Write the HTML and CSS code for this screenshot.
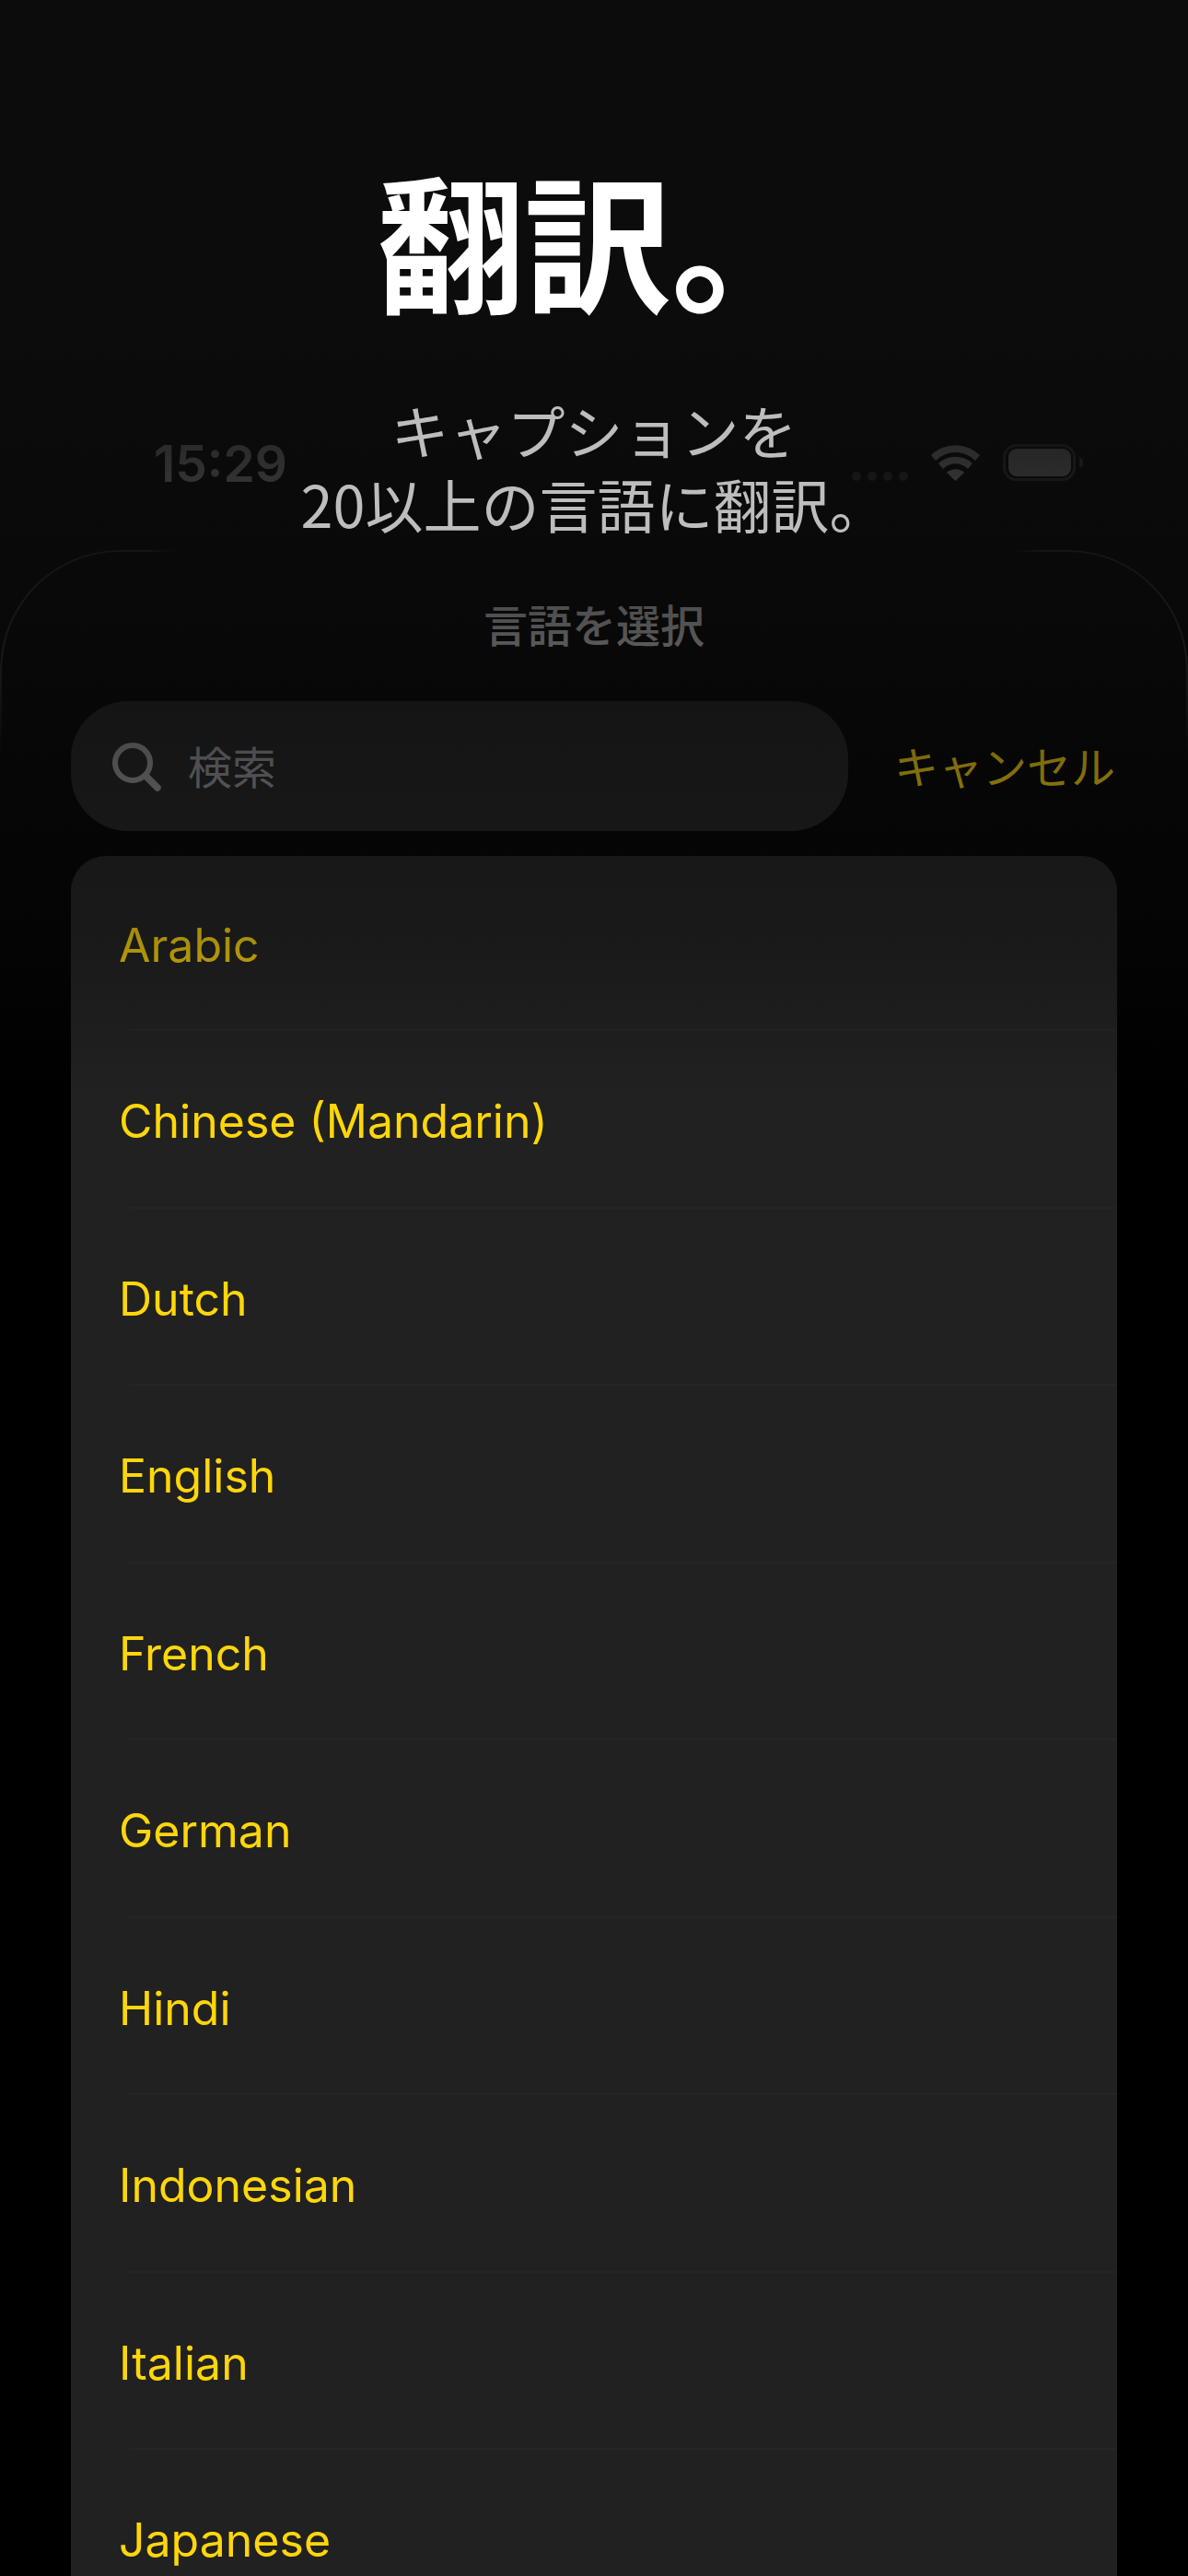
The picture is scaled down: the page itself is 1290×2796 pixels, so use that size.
FILE: index.html
```html
<!DOCTYPE html>
<html lang="ja">
<head>
<meta charset="utf-8">
<title>翻訳</title>
<link rel="stylesheet" href="styles.css">
</head>
<body>
<main class="page">
  <div class="status">
    <span class="time">15:29</span>
    <svg class="status-icons" width="251" height="40" viewBox="0 0 251 40" aria-hidden="true">
      <g fill="#fff" opacity=".3">
        <circle cx="5" cy="35" r="5"/><circle cx="22" cy="35" r="5"/><circle cx="39" cy="35" r="5"/><circle cx="56" cy="35" r="5"/>
      </g>
      <g fill="#fff">
        <path d="M86 13 A38 38 0 0 1 139 13 L134 19 A30 30 0 0 0 91 19 Z" transform="translate(0 -1)"/>
        <path d="M94 22 A27 27 0 0 1 131 22 L126 28 A19 19 0 0 0 99 28 Z" transform="translate(0 -1)"/>
        <path d="M103 31 A14 14 0 0 1 122 31 L112.5 40 Z"/>
      </g>
      <rect x="165.5" y="1.5" width="76" height="37" rx="13" fill="none" stroke="#fff" stroke-opacity=".35" stroke-width="3"/>
      <rect x="170" y="5" width="68" height="30" rx="9" fill="#fff" fill-opacity=".85"/>
      <path d="M247 14 C250 15 251 17 251 20 C251 23 250 25 247 26 Z" fill="#fff" fill-opacity=".4"/>
    </svg>
  </div>
  <section class="sheet">
    <h2 class="sheet-title">言語を選択</h2>
    <div class="search-row">
      <div class="search">
        <svg class="search-icon" width="53" height="53" viewBox="0 0 53 53" aria-hidden="true">
          <circle cx="22" cy="22" r="19" fill="none" stroke="currentColor" stroke-width="6"/>
          <path d="M36 36 L49 49" fill="none" stroke="currentColor" stroke-width="7.5" stroke-linecap="round"/>
        </svg>
        <span class="search-text">検索</span>
      </div>
      <span class="cancel">キャンセル</span>
    </div>
    <ul class="list">
      <li class="row"><span class="label">Arabic</span></li>
      <li class="row"><span class="label">Chinese (Mandarin)</span></li>
      <li class="row"><span class="label">Dutch</span></li>
      <li class="row"><span class="label">English</span></li>
      <li class="row"><span class="label">French</span></li>
      <li class="row"><span class="label">German</span></li>
      <li class="row"><span class="label">Hindi</span></li>
      <li class="row"><span class="label">Indonesian</span></li>
      <li class="row"><span class="label">Italian</span></li>
      <li class="row"><span class="label">Japanese</span></li>
    </ul>
  </section>
</main>
<header class="hero">
  <h1 class="hero-title">翻訳。</h1>
  <p class="hero-sub">キャプションを<br>20以上の言語に翻訳。</p>
</header>
</body>
</html>
```
FILE: styles.css
```css
* { box-sizing: border-box; }
html, body { margin: 0; padding: 0; background: #000; }
body {
  position: relative;
  width: 1290px;
  height: 2796px;
  overflow: hidden;
  font-family: "Noto Sans CJK JP", "Noto Sans", sans-serif;
  color: #fff;
}
.page { padding-top: 460px; }

.status {
  display: flex;
  justify-content: space-between;
  align-items: center;
  height: 86px;
  padding: 0 114px 0 167px;
}
.time {
  font: 600 55px/1 Inter, "Liberation Sans", sans-serif;
  color: #fff;
}
.status-icons { display: block; margin-top: -2px; }

.sheet {
  position: relative;
  margin-top: 51px;
  padding: 0 77px;
}
.sheet::before {
  content: "";
  position: absolute;
  left: 0;
  right: 0;
  top: 0;
  height: 220px;
  border: 2px solid #363636;
  border-bottom: 0;
  border-radius: 130px 130px 0 0;
  -webkit-mask-image: linear-gradient(to bottom, #000 50%, transparent 100%), linear-gradient(to right, #000 160px, transparent 190px, transparent 1100px, #000 1130px);
  -webkit-mask-composite: source-in;
  mask-composite: intersect;
}
.sheet-title {
  margin: 0;
  padding-top: 48px;
  height: 164px;
  font-size: 48px;
  line-height: 62px;
  font-weight: 500;
  text-align: center;
  color: #fff;
}
.search-row {
  display: flex;
  align-items: center;
  justify-content: space-between;
  height: 141px;
}
.search {
  display: flex;
  align-items: center;
  gap: 29px;
  width: 844px;
  height: 141px;
  padding-left: 45px;
  border-radius: 62px;
  background: #212121;
  color: #98989e;
}
.search-text { font-size: 48px; line-height: 60px; margin-top: -4px; }
.search-icon { display: block; margin-top: 2px; }
.cancel {
  font-size: 48px;
  line-height: 60px;
  margin-top: -4px;
  color: #ffd60a;
  margin-right: 2px;
}

.list {
  list-style: none;
  margin: 27px 0 0;
  padding: 0;
  width: 1136px;
  border-radius: 38px;
  background: #212121;
}
.row {
  display: flex;
  align-items: center;
  height: 192.5px;
  margin-left: 63px;
  padding-top: 6px;
  border-bottom: 2px solid #252525;
}
.row:first-child { height: 190px; padding-top: 6px; }
.label {
  margin-left: -11px;
  font: 420 50px/60px Inter, "Liberation Sans", sans-serif;
  color: #ffd60a;
}

.hero {
  position: absolute;
  left: 0;
  right: 0;
  top: 0;
  height: 1190px;
  text-align: center;
  background: linear-gradient(to bottom,
    rgba(12,12,12,1) 0,
    rgba(12,12,12,1) 340px,
    rgba(12,12,12,.86) 503px,
    rgba(12,12,12,.71) 680px,
    rgba(12,12,12,.52) 832px,
    rgba(12,12,12,.35) 1026px,
    rgba(12,12,12,0) 1190px);
}
.hero-title {
  margin: 0;
  padding: 178px 0 0 8px;
  font-size: 160px;
  line-height: 160px;
  font-weight: 700;
  color: #fff;
}
.hero-sub {
  margin: 88px 0 0;
  font-size: 63px;
  line-height: 80px;
  font-weight: 400;
  color: #bdbdbd;
}
```
